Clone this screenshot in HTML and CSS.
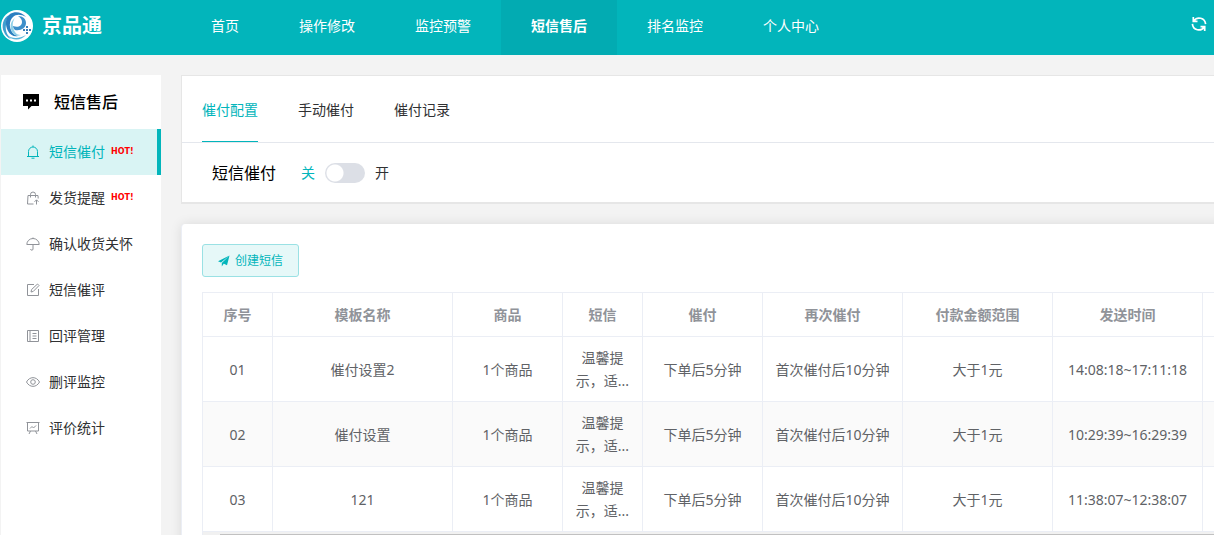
FILE: index.html
```html
<!DOCTYPE html>
<html lang="zh-CN">
<head>
<meta charset="utf-8">
<title>京品通</title>
<link rel="stylesheet" href="styles.css">
</head>
<body>
<header class="topbar">
  <a class="brand" href="#">
    <svg class="brand-logo" viewBox="0 0 32 32" aria-hidden="true">
      <circle cx="16" cy="16" r="16" fill="#fff"/>
      <path d="M8 5C2 8 0 16 3 22c1 3 4 6 7 7-4-4-6-9-5-14 0-4 1-7 3-10z" fill="#3f9fd0"/>
      <path d="M9 4c5-3 12-2 16 3-5-3-10-3-13 0-4 4-4 10-1 15 1 2 3 3 6 4-4 1-8-1-10-5C4 15 4 8 9 4z" fill="#2b7fc0"/>
      <path d="M17 6c5 0 8 3 8 7 0 5-5 8-11 7-1-1-2-2-2-4 5 2 9 0 9-4 0-2-1-4-4-6z" fill="#3d8fca"/>
      <path d="M14 8c-3 4-3 9 0 14 1 2 3 3 6 3-5 2-9-1-10-6-1-4 0-8 4-11z" fill="#8fd0e8"/>
      <path d="M6 25c5 4 12 4 19 0-4 5-13 7-19 0z" fill="#58b5da"/>
      <path d="M25 16h2v2h-2zM22 19h2v2h-2zM25 19h2v2h-2zM28 19h2v2h-2zM25 22h2v2h-2z" fill="#3a7fba"/>
    </svg>
    <span class="brand-name">京品通</span>
  </a>
  <nav class="topnav">
    <a href="#">首页</a>
    <a href="#">操作修改</a>
    <a href="#">监控预警</a>
    <a class="current" href="#" aria-current="page">短信售后</a>
    <a href="#">排名监控</a>
    <a href="#">个人中心</a>
  </nav>
  <button class="refresh" type="button" aria-label="刷新">
    <svg viewBox="0 0 16 16" fill="none" stroke="currentColor" stroke-width="1.700">
      <path d="M3 4.800C6 .2 14 1.500 14.600 8.200M13 11.200C10 15.800 2 14.500 1.400 7.800M2.300 1v4.300h4.200M13.700 15v-4.300H9.500"/>
    </svg>
  </button>
</header>
<div class="layout">
  <aside class="sidebar">
    <h2 class="side-title">
      <svg viewBox="0 0 16 16" aria-hidden="true"><path d="M0 0h16v12H8.500L5 15.500V12H0z"/><path d="M3 5.500h2v2H3zM7 5.500h2v2H7zM11 5.500h2v2h-2z" fill="#fff"/></svg>
      短信售后
    </h2>
    <nav class="side-nav">
      <a class="active" href="#"><svg viewBox="0 0 14 14"><path d="M1 11.500h12M2.500 11.500V6.500a4.500 4.500 0 0 1 9 0v5M7 2V.5M5.500 13.200h3"/></svg><span>短信催付</span><span class="hot">HOT!</span></a>
      <a href="#"><svg viewBox="0 0 14 14"><path d="M7.500 13H1.500l.5-8.500h10l.2 3M4.500 6.500V3.500a2.500 2.500 0 0 1 5 0v3M10.500 13.500V9M8.500 10.800l2-2 2 2"/></svg><span>发货提醒</span><span class="hot">HOT!</span></a>
      <a href="#"><svg viewBox="0 0 14 14"><path d="M.8 7.500a6.200 6 0 0 1 12.400 0zM7 1.500V.5M7 7.500v4.500a1.200 1.200 0 0 1-2.400 0"/></svg><span>确认收货关怀</span></a>
      <a href="#"><svg viewBox="0 0 14 14"><path d="M8 1.500H1.500v11h11V6M5 9l.6-2.500L11.500 1l1.500 1.500-5.700 5.900z"/></svg><span>短信催评</span></a>
      <a href="#"><svg viewBox="0 0 14 14"><path d="M1.500 1.500h11v11h-11zM4 1.500v11M6.500 4.500h4M6.500 7h4M6.500 9.500h4"/></svg><span>回评管理</span></a>
      <a href="#"><svg viewBox="0 0 14 14"><path d="M.5 7C3.500 1.200 10.500 1.200 13.500 7c-3 5.800-10 5.800-13 0z"/><circle cx="7" cy="7" r="2.300"/></svg><span>删评监控</span></a>
      <a href="#"><svg viewBox="0 0 14 14"><path d="M.5 1.500h13M1.500 1.500v8.500h11V1.500M4.500 10l-1.500 3M9.500 10l1.500 3M4 7.500l2-2 1.500 1.500L10 4.500"/></svg><span>评价统计</span></a>
    </nav>
  </aside>
  <main class="content">
    <section class="card config">
      <nav class="tabs">
        <a class="selected" href="#">催付配置</a>
        <a href="#">手动催付</a>
        <a href="#">催付记录</a>
      </nav>
      <div class="switch-row">
        <label class="switch-title" for="sms-switch">短信催付</label>
        <span class="state-off">关</span>
        <input class="switch" id="sms-switch" type="checkbox" role="switch">
        <span>开</span>
      </div>
    </section>
    <section class="card list">
      <button class="create" type="button">
        <svg viewBox="0 0 12 12" aria-hidden="true"><path d="M11.500.5L0 6.200l3 1.300zM11.500.5L3.800 8v3.500l1.700-2.600zM11.500.5L5 8.200l4 2z" fill="currentColor"/></svg>
        创建短信
      </button>
      <div class="table-wrap">
        <table>
          <colgroup><col class="w70"><col class="w180"><col class="w110"><col class="w80"><col class="w120"><col class="w140"><col class="w150"><col class="w150"><col class="w150"></colgroup>
          <thead>
            <tr><th>序号</th><th>模板名称</th><th>商品</th><th>短信</th><th>催付</th><th>再次催付</th><th>付款金额范围</th><th>发送时间</th><th></th></tr>
          </thead>
          <tbody>
            <tr><td>01</td><td>催付设置2</td><td>1个商品</td><td>温馨提示，适...</td><td>下单后5分钟</td><td>首次催付后10分钟</td><td>大于1元</td><td>14:08:18~17:11:18</td><td></td></tr>
            <tr><td>02</td><td>催付设置</td><td>1个商品</td><td>温馨提示，适...</td><td>下单后5分钟</td><td>首次催付后10分钟</td><td>大于1元</td><td>10:29:39~16:29:39</td><td></td></tr>
            <tr><td>03</td><td>121</td><td>1个商品</td><td>温馨提示，适...</td><td>下单后5分钟</td><td>首次催付后10分钟</td><td>大于1元</td><td>11:38:07~12:38:07</td><td></td></tr>
          </tbody>
        </table>
        <div class="scroll-track"><div class="scroll-thumb"></div></div>
      </div>
    </section>
  </main>
</div>
</body>
</html>
```
FILE: styles.css
```css
* { box-sizing: border-box; }

body {
  margin: 0;
  height: 100vh;
  overflow: hidden;
  display: flex;
  flex-direction: column;
  background: #f3f3f3;
  color: #303133;
  font: 14px/20px "Noto Sans", "Noto Sans CJK SC", sans-serif;
}

a { color: inherit; text-decoration: none; }
button { font: inherit; cursor: pointer; }

.topbar {
  flex: none;
  display: flex;
  height: 55px;
  background: #02b5bb;
  color: #fff;
}

.brand {
  width: 181px;
  padding: 0 0 4px 1px;
  display: flex;
  align-items: center;
  gap: 9px;
}
.brand-logo { width: 32px; height: 32px; }
.brand-name { font-size: 20px; font-weight: 700; line-height: 28px; }

.topnav { display: flex; flex: 1; }
.topnav a { padding: 0 30px; line-height: 51px; }
.topnav .current { background: #02abb2; font-weight: 700; }

.refresh {
  padding: 0 7px 8px;
  border: 0;
  background: none;
  color: #fff;
  display: flex;
  align-items: center;
}
.refresh svg { width: 16px; height: 16px; }

.layout {
  flex: 1;
  min-height: 0;
  overflow: hidden;
  display: flex;
  gap: 20px;
  padding: 20px 0 0 1px;
}

.sidebar { flex: none; width: 160px; background: #fff; }

.side-title {
  margin: 0;
  height: 54px;
  padding-left: 22px;
  display: flex;
  align-items: center;
  gap: 15px;
  color: #000;
  font-size: 16px;
  font-weight: 500;
}
.side-title svg { width: 16px; height: 16px; }

.side-nav a {
  height: 46px;
  padding-left: 25px;
  display: flex;
  align-items: center;
}
.side-nav svg {
  width: 14px;
  height: 14px;
  margin-right: 9px;
  fill: none;
  stroke: #909399;
}
.side-nav .active {
  background: #d9f4f4;
  border-right: 4px solid #02b5bb;
  color: #02b5bb;
}
.side-nav .active svg { stroke: #02b5bb; }
.hot {
  margin-left: 6px;
  color: #f00;
  font: 700 8px/8px "DejaVu Sans", sans-serif;
}

.content {
  flex: 1;
  min-width: 1220px;
  display: flex;
  flex-direction: column;
  gap: 20px;
}

.card { background: #fff; }
.config {
  border: 1px solid #e6e6e6;
  border-bottom: 2px solid #e6e6e6;
}

.tabs {
  display: flex;
  gap: 40px;
  padding: 0 20px;
  border-bottom: 1px solid #e4e7ed;
}
.tabs a { height: 66px; line-height: 68px; border-bottom: 1px solid transparent; }
.tabs .selected { color: #02b5bb; border-color: #02b5bb; }

.switch-row {
  height: 59px;
  padding-left: 30px;
  display: flex;
  align-items: center;
  gap: 10px;
}
.switch-title { margin-right: 15px; color: #000; font-size: 16px; }
.state-off { color: #02b5bb; }
.switch {
  appearance: none;
  width: 40px;
  height: 20px;
  margin: 0;
  border-radius: 10px;
  background: radial-gradient(circle at 10px 10px, #fff 8px, #dcdfe6 9px);
}

.list {
  flex: 1;
  padding: 20px;
  border-radius: 4px;
  border-left: 1px solid #ebeef5;
  box-shadow: 0 0 12px rgba(0, 0, 0, 0.1);
}

.create {
  height: 33px;
  padding: 0 15px;
  display: flex;
  align-items: center;
  gap: 5px;
  border: 1px solid #9ae1e4;
  border-radius: 3px;
  background: #e6f8f8;
  color: #02b5bb;
  font-size: 12px;
}
.create svg { width: 12px; height: 12px; }

.table-wrap { margin-top: 15px; border-left: 1px solid #ebeef5; }
table {
  width: 1150px;
  table-layout: fixed;
  border-collapse: separate;
  border-spacing: 0;
  border-top: 1px solid #ebeef5;
  color: #606266;
  line-height: 23px;
  text-align: center;
}
th, td {
  padding: 0 12px;
  border-right: 1px solid #ebeef5;
  border-bottom: 1px solid #ebeef5;
}
th { height: 44px; color: #909399; font-weight: 700; }
td { height: 65px; }
tbody tr:nth-child(even) { background: #fafafa; }

.w70 { width: 70px; }
.w80 { width: 80px; }
.w110 { width: 110px; }
.w120 { width: 120px; }
.w140 { width: 140px; }
.w150 { width: 150px; }
.w180 { width: 180px; }

.scroll-track { height: 17px; padding: 2px 17px; background: #f1f1f1; }
.scroll-thumb { height: 13px; background: #c1c1c1; }
```
